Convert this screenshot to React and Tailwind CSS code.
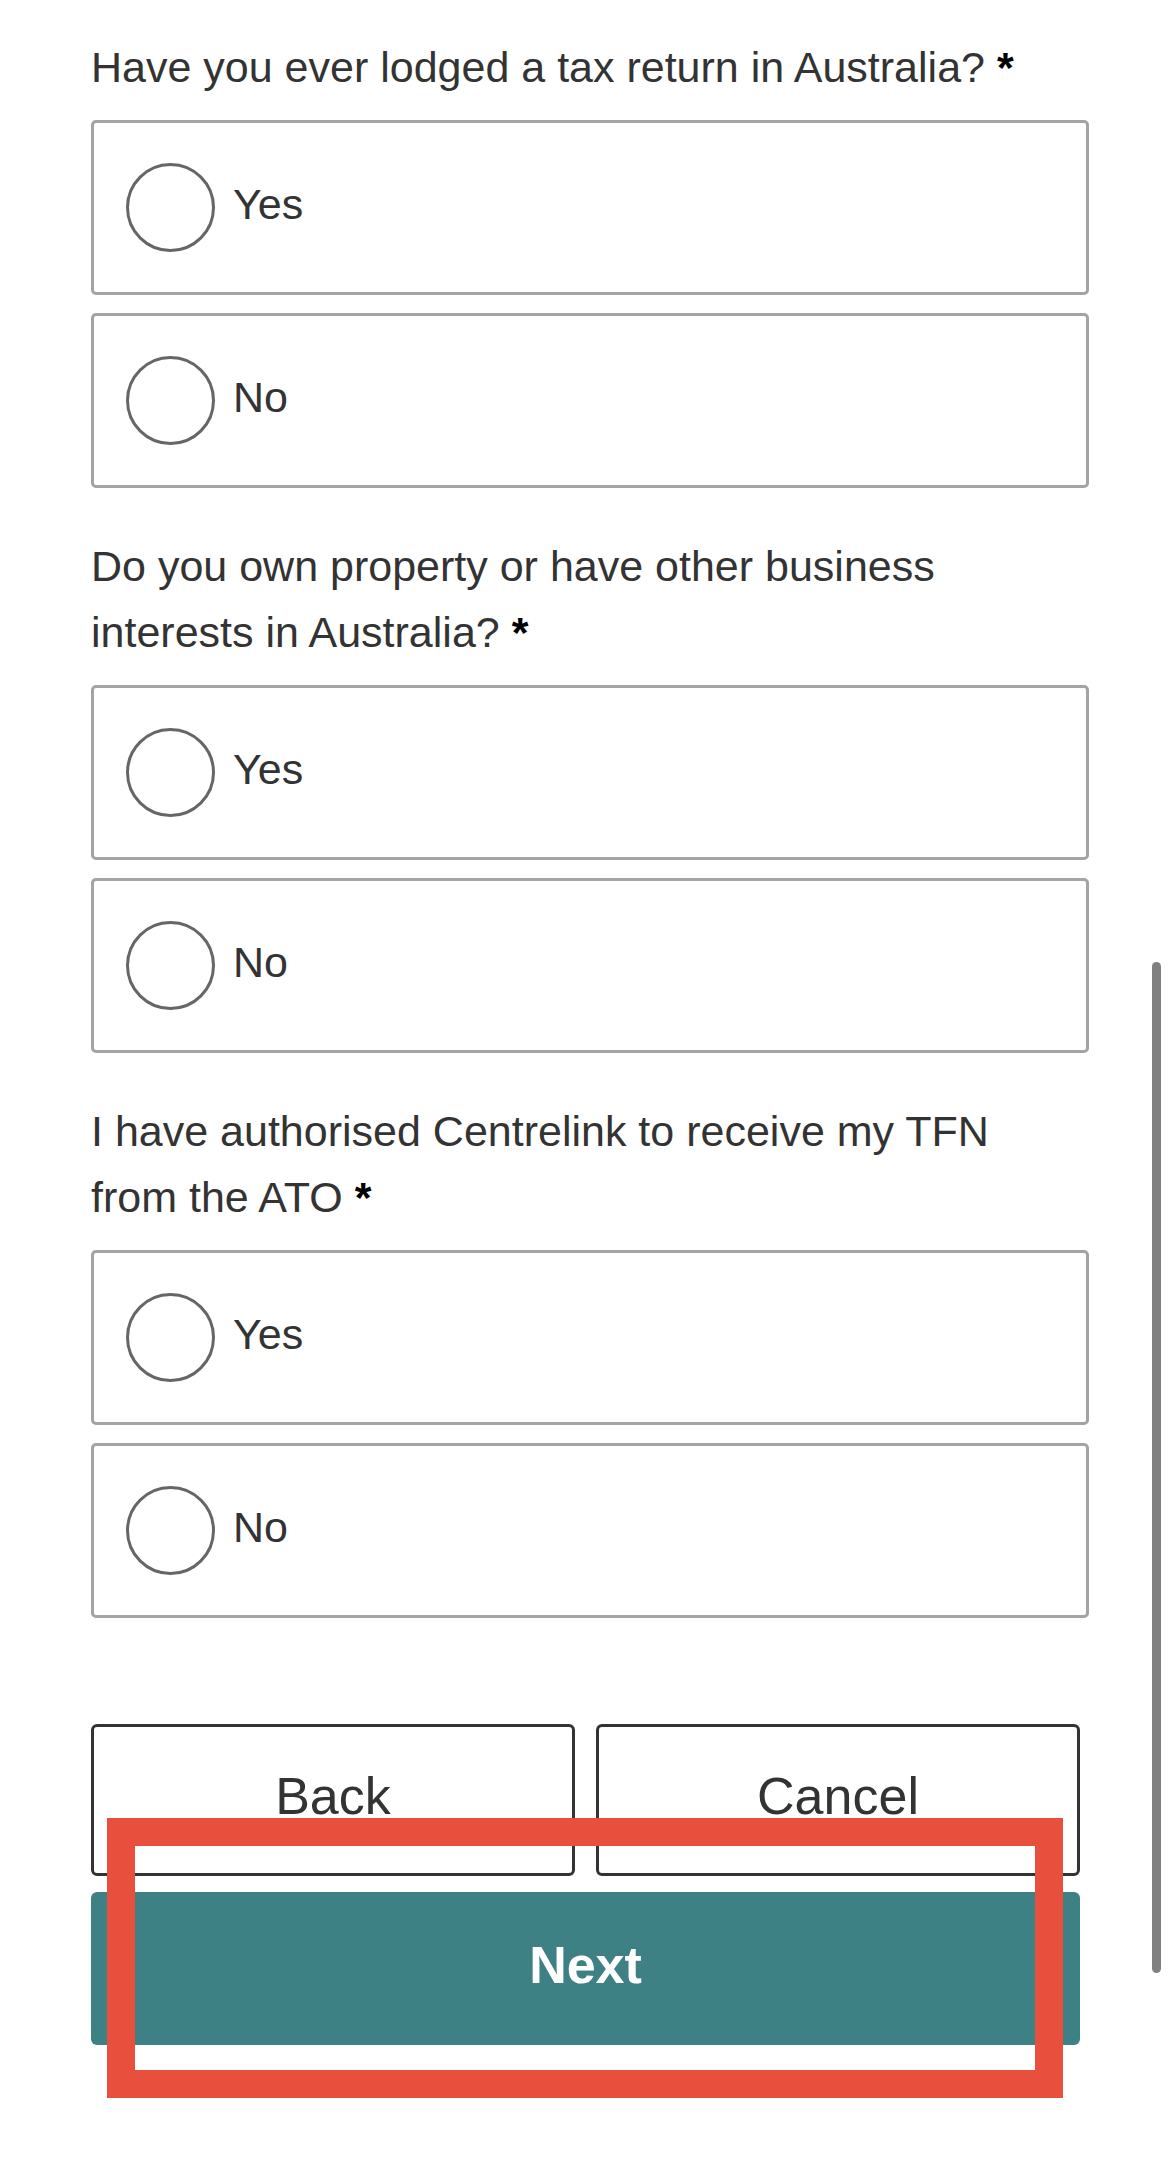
import { useState } from 'react';

const questions = [
  { id: 'lodged', text: 'Have you ever lodged a tax return in Australia?' },
  { id: 'property', text: 'Do you own property or have other business interests in Australia?' },
  { id: 'authorised', text: 'I have authorised Centrelink to receive my TFN from the ATO' },
];

function RadioOption({ label, checked, onSelect }) {
  return (
    <button
      type="button"
      onClick={onSelect}
      className="flex h-[175px] w-[998px] items-center rounded-[5px] border-[3px] border-[#a3a3a3] bg-white pl-[32px] text-left"
    >
      <span className="flex h-[89px] w-[89px] shrink-0 items-center justify-center rounded-full border-[3px] border-[#666666]">
        {checked && <span className="h-[45px] w-[45px] rounded-full bg-[#3d8185]"></span>}
      </span>
      <span className="ml-[18px] pb-[6px] text-[43px] leading-none text-[#333333]">{label}</span>
    </button>
  );
}

function Question({ q, value, onChange, first }) {
  return (
    <div className={first ? '' : 'mt-[45px]'}>
      <p className="w-[960px] text-[43px] leading-[66px] text-[#333333]">
        {q.text} <span className="font-bold text-black">*</span>
      </p>
      <div className="mt-[20px] flex flex-col gap-[18px]">
        <RadioOption label="Yes" checked={value === 'yes'} onSelect={() => onChange('yes')} />
        <RadioOption label="No" checked={value === 'no'} onSelect={() => onChange('no')} />
      </div>
    </div>
  );
}

export default function App() {
  const [answers, setAnswers] = useState({});

  return (
    <div className="relative min-h-[2170px] overflow-hidden bg-white font-['Liberation_Sans',Arial,sans-serif]">
      <div className="pl-[91px] pt-[34px]">
        {questions.map((q, i) => (
          <Question
            key={q.id}
            q={q}
            first={i === 0}
            value={answers[q.id]}
            onChange={(v) => setAnswers({ ...answers, [q.id]: v })}
          />
        ))}

        <div className="mt-[106px] w-[989px]">
          <div className="grid grid-cols-2 gap-[21px]">
            <button
              type="button"
              className="h-[152px] rounded-[6px] border-[3px] border-[#333333] bg-white pb-[8px] text-[52px] text-[#333333]"
            >
              Back
            </button>
            <button
              type="button"
              className="h-[152px] rounded-[6px] border-[3px] border-[#333333] bg-white pb-[8px] text-[52px] text-[#333333]"
            >
              Cancel
            </button>
          </div>
          <button
            type="button"
            className="mt-[16px] h-[153px] w-full rounded-[6px] bg-[#3d8185] pb-[8px] text-[52px] font-bold text-white"
          >
            Next
          </button>
        </div>
      </div>

      {/* highlight annotation over the Next button */}
      <div className="pointer-events-none absolute left-[107px] top-[1818px] h-[280px] w-[956px] border-[28px] border-[#e94f3d]"></div>

      {/* scroll indicator */}
      <div className="absolute left-[1152px] top-[962px] h-[1011px] w-[9px] rounded-full bg-[#808080]"></div>
    </div>
  );
}
